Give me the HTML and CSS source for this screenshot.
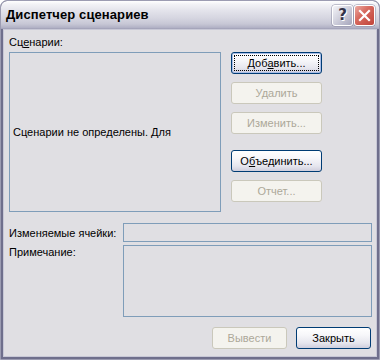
FILE: index.html
```html
<!DOCTYPE html>
<html lang="ru">
<head>
<meta charset="utf-8">
<title>Диспетчер сценариев</title>
<link rel="stylesheet" href="styles.css">
</head>
<body>
<div class="window">
  <div class="titlebar">
    <span class="title">Диспетчер сценариев</span>
    <div class="caption-buttons">
      <span class="cap-btn help">?</span>
      <span class="cap-btn close">
        <svg width="13" height="13" viewBox="0 0 13 13"><path d="M2 2 L11 11 M11 2 L2 11" stroke="#ffffff" stroke-width="2.2" stroke-linecap="square"/></svg>
      </span>
    </div>
  </div>
  <div class="client">
    <div class="top">
      <div class="lbl scen-label">Сц<u>е</u>нарии:</div>
      <div class="listbox">Сценарии не определены. Для</div>
      <div class="btns">
        <div class="btn focused"><span class="focus-rect">Доб<u>а</u>вить...</span></div>
        <div class="btn disabled">Удалить</div>
        <div class="btn disabled">Изменить...</div>
        <div class="btn merge">О<u>б</u>ъединить...</div>
        <div class="btn disabled">Отчет...</div>
      </div>
    </div>
    <div class="fields">
      <div class="lbl cells-label">Изменяемые ячейки:</div>
      <div class="field"></div>
      <div class="lbl note-label">Примечание:</div>
      <div class="note"></div>
    </div>
    <div class="footer">
      <div class="btn wide disabled">Вывести</div>
      <div class="btn wide">Закрыть</div>
    </div>
  </div>
</div>
</body>
</html>
```

FILE: styles.css
```css
html, body {
  margin: 0;
  padding: 0;
  background: #ffffff;
}

.window {
  width: 380px;
  height: 360px;
  box-sizing: border-box;
  border: 1px solid #9c9cb2;
  border-radius: 7px 7px 0 0;
  background: #6f6f8c;
  padding: 0 2px 2px 2px;
  display: flex;
  flex-direction: column;
  overflow: hidden;
  font-family: "Liberation Sans", Arial, sans-serif;
  font-size: 11px;
  color: #000000;
}

.titlebar {
  height: 28px;
  margin: 0 -2px;
  flex: none;
  display: flex;
  align-items: center;
  justify-content: space-between;
  padding: 0 4px 0 5px;
  background: linear-gradient(to bottom, #ffffff 0%, #f2f2f6 12%, #e3e3eb 35%, #d6d6e1 60%, #c7c7d5 82%, #b0b0c4 96%, #9c9cb2 100%);
  border-radius: 6px 6px 0 0;
}

.title {
  font-weight: bold;
  font-size: 13px;
  line-height: 16px;
  color: #000000;
  letter-spacing: 0.1px;
}

.caption-buttons {
  display: flex;
  gap: 1px;
}

.cap-btn {
  width: 21px;
  height: 21px;
  box-sizing: border-box;
  border: 1px solid #ffffff;
  border-radius: 3px;
  display: flex;
  align-items: center;
  justify-content: center;
  box-shadow: 0 0 0 0.5px #8a8aa2;
}

.help {
  background: linear-gradient(135deg, #f4f4f8 0%, #d2d2de 45%, #a6a6bc 100%);
  font-family: "DejaVu Sans", sans-serif;
  font-weight: bold;
  font-size: 15px;
  line-height: 15px;
  color: #333348;
  text-shadow: 1px 1px 0 #ffffff;
}

.close {
  background: linear-gradient(135deg, #ecaaa2 0%, #d76a5f 40%, #c0433a 100%);
}

.client {
  flex: 1;
  background: #e0dfe3;
  border: 1px solid #c8c8d6;
  padding: 6px 5px 0 5px;
  display: flex;
  flex-direction: column;
}

.lbl {
  line-height: 13px;
  white-space: nowrap;
}

.top {
  display: grid;
  grid-template-columns: 212px 91px;
  grid-template-rows: 13px 160px;
  column-gap: 10px;
  row-gap: 3px;
}

.scen-label {
  grid-column: 1;
  grid-row: 1;
}

.listbox {
  grid-column: 1;
  grid-row: 2;
  box-sizing: border-box;
  border: 1px solid #7f9db9;
  display: flex;
  align-items: center;
  padding-left: 3px;
  white-space: nowrap;
  overflow: hidden;
}

.btns {
  grid-column: 2;
  grid-row: 2;
  display: flex;
  flex-direction: column;
  gap: 8px;
}

.btn {
  box-sizing: border-box;
  width: 91px;
  height: 22px;
  border: 1px solid #003c74;
  border-radius: 3px;
  background: linear-gradient(to bottom, #ffffff 0%, #f7f7fa 35%, #e6e6ee 75%, #cfcedd 100%);
  display: flex;
  align-items: center;
  justify-content: center;
  line-height: 13px;
  white-space: nowrap;
}

.btn.focused {
  box-shadow: inset 0 0 0 1px #a9bde6;
  padding: 2px;
}

.focus-rect {
  flex: 1;
  align-self: stretch;
  display: flex;
  align-items: center;
  justify-content: center;
  border: 1px dotted #000000;
}

.btn.merge {
  margin-top: 8px;
}

.btn.disabled {
  border-color: #cac8bb;
  background: #f4f3ee;
  color: #aca899;
}

.fields {
  margin-top: 11px;
  display: grid;
  grid-template-columns: 114px 249px;
  grid-template-rows: 19px 72px;
  row-gap: 3px;
}

.cells-label {
  align-self: center;
  padding-top: 1px;
}

.note-label {
  align-self: start;
  margin-top: 1px;
}

.field, .note {
  box-sizing: border-box;
  border: 1px solid #7f9db9;
}

.footer {
  margin-top: 10px;
  display: flex;
  justify-content: flex-end;
  gap: 9px;
}

.btn.wide {
  width: 75px;
}
```
